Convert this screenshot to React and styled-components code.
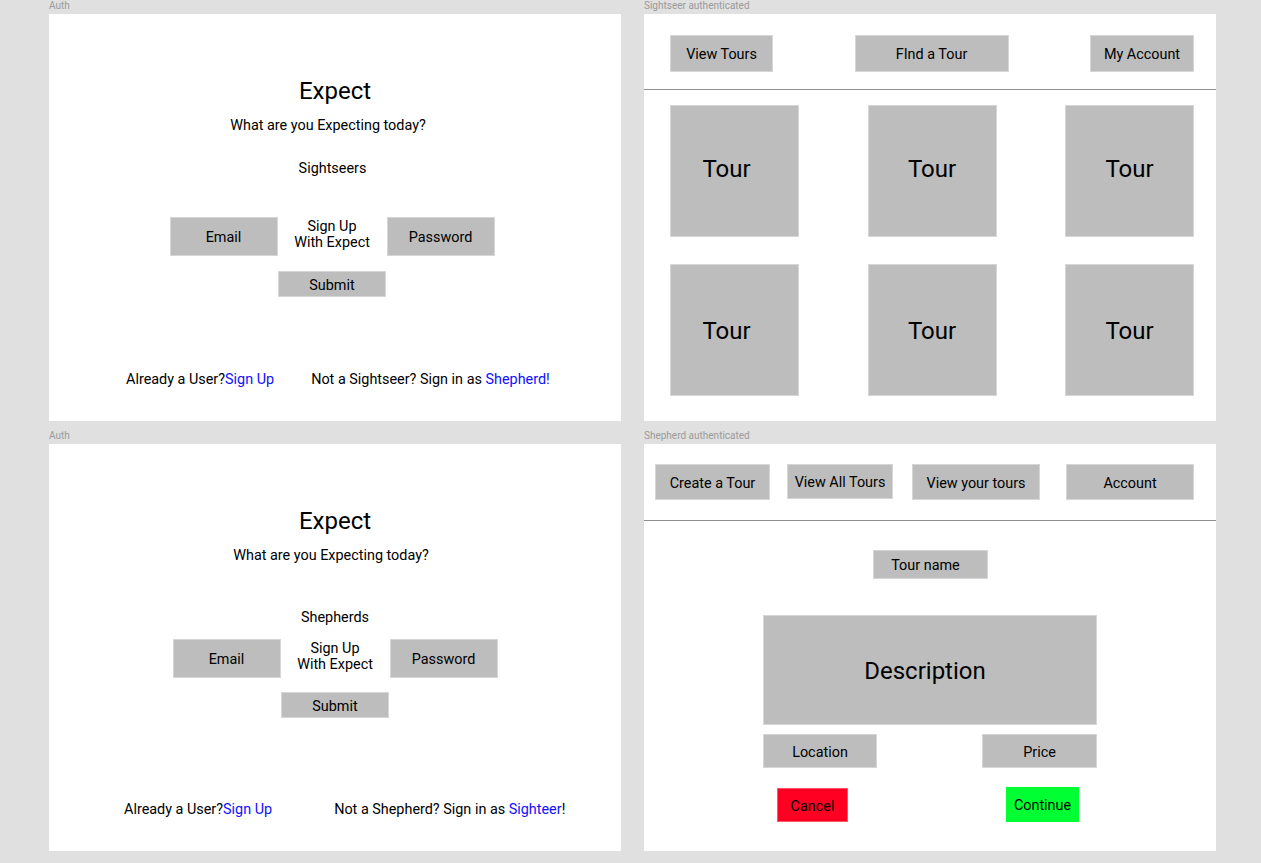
import React from 'react';
import styled, { createGlobalStyle } from 'styled-components';

const GlobalStyle = createGlobalStyle`
    html, body {
        margin:0;
        padding:0;
        background:#e0e0e0;
    }
    body {
        font-family: Roboto, "Liberation Sans", Arial, sans-serif;
        color:#000;
    }
`;

const Canvas = styled.div`
    display:grid;
    grid-template-columns:572px 572px;
    align-content:start;
    column-gap:23px;
    row-gap:9px;
    padding-left:49px;
    width:1261px;
    min-height:863px;
    box-sizing:border-box;
`;

const FrameWrap = styled.div`
    display:flex;
    flex-direction:column;
`;

const FrameLabel = styled.div`
    height:14px;
    line-height:12px;
    font-size:10px;
    color:#9a9a9a;
    white-space:nowrap;
`;

const Frame = styled.div`
    width:572px;
    height:407px;
    background:#fff;
    box-sizing:border-box;
    display:flex;
    flex-direction:column;
`;

/* ---------- auth ---------- */

const AuthBody = styled.div`
    display:flex;
    flex-direction:column;
    align-items:center;
    height:100%;
    padding-top:63px;
    padding-bottom:33px;
    box-sizing:border-box;
`;

const Title = styled.h1`
    margin:0;
    font-size:24px;
    line-height:28px;
    font-weight:400;
`;

const Text = styled.div`
    font-size:14.4px;
    line-height:16px;
    margin-top:${p => p.$mt || 0}px;
    margin-left:${p => p.$shift || 0}px;
    text-align:center;
    white-space:nowrap;
`;

const Box = styled.div`
    width:${p => p.$w}px;
    height:${p => p.$h}px;
    margin-left:${p => p.$ml || 0}px;
    margin-top:${p => p.$mt || 0}px;
    background:${p => p.$bg || '#bdbdbd'};
    border:1px solid ${p => p.$border || '#d6d6d6'};
    box-sizing:border-box;
    display:flex;
    align-items:center;
    justify-content:center;
    font-size:${p => p.$fs || 14.4}px;
    padding-top:${p => p.$pt ?? 2}px;
    padding-right:${p => p.$pr || 0}px;
    padding-bottom:${p => p.$pb || 0}px;
    flex-shrink:0;
    white-space:nowrap;
`;

const FormRow = styled.div`
    display:flex;
    align-items:center;
    margin-top:${p => p.$mt}px;
    margin-left:${p => p.$shift || 0}px;
`;

const Middle = styled.div`
    width:109px;
    text-align:center;
    font-size:14.4px;
    line-height:16px;
    padding-bottom:3px;
`;

const Footer = styled.div`
    margin-top:auto;
    align-self:stretch;
    display:flex;
    gap:${p => p.$gap}px;
    padding-left:${p => p.$pl}px;
    font-size:14.4px;
    line-height:16px;
    white-space:nowrap;
`;

const Link = styled.span`
    color:#1010ff;
`;

function AuthFrame({ role, subShift, roleShift, roleGap, rowGap, submitGap, shift, footGap, footLeft, other, otherLink, tail }) {
    return (
        <Frame>
            <AuthBody>
                <Title>Expect</Title>
                <Text $mt={13} $shift={subShift}>What are you Expecting today?</Text>
                <Text $mt={roleGap} $shift={roleShift}>{role}</Text>
                <FormRow $mt={rowGap} $shift={shift}>
                    <Box $w={108} $h={39}>Email</Box>
                    <Middle>Sign Up<br />With Expect</Middle>
                    <Box $w={108} $h={39}>Password</Box>
                </FormRow>
                <FormRow $mt={submitGap} $shift={shift}>
                    <Box $w={108} $h={26}>Submit</Box>
                </FormRow>
                <Footer $gap={footGap} $pl={footLeft}>
                    <span>Already a User?<Link>Sign Up</Link></span>
                    <span>{other}<Link>{otherLink}</Link>{tail}</span>
                </Footer>
            </AuthBody>
        </Frame>
    );
}

/* ---------- authenticated ---------- */

const NavRow = styled.div`
    height:${p => p.$h}px;
    display:flex;
    align-items:flex-start;
    justify-content:${p => p.$justify || 'flex-start'};
    gap:${p => p.$gap || 0}px;
    padding:${p => p.$top}px 22px 0 ${p => p.$left}px;
    box-sizing:border-box;
    border-bottom:1px solid #8e8e8e;
`;

const TourGrid = styled.div`
    display:grid;
    grid-template-columns:129px 129px 129px;
    justify-content:space-between;
    row-gap:27px;
    padding:15px 22px 0 26px;
`;

const CreateBody = styled.div`
    display:flex;
    flex-direction:column;
    align-items:center;
    padding-top:29px;
`;

const Pair = styled.div`
    width:334px;
    display:flex;
    justify-content:space-between;
    align-items:flex-start;
    margin-top:${p => p.$mt}px;
    padding:0 ${p => p.$pr || 0}px 0 ${p => p.$pl || 0}px;
    box-sizing:border-box;
`;

const tourRows = [0, 1];
const tourCols = [16, 0, 0];

export default function App() {
    return (
        <>
            <GlobalStyle />
            <Canvas>
                <FrameWrap>
                    <FrameLabel>Auth</FrameLabel>
                    <AuthFrame
                        role="Sightseers"
                        subShift={-14}
                        roleShift={-5}
                        roleGap={27}
                        rowGap={40}
                        submitGap={15}
                        shift={-6}
                        footGap={37}
                        footLeft={77}
                        other="Not a Sightseer? Sign in as "
                        otherLink="Shepherd!"
                        tail=""
                    />
                </FrameWrap>

                <FrameWrap>
                    <FrameLabel>Sightseer authenticated</FrameLabel>
                    <Frame>
                        <NavRow $h={76} $top={21} $left={26} $justify="space-between">
                            <Box $w={103} $h={37}>View Tours</Box>
                            <Box $w={154} $h={37}>FInd a Tour</Box>
                            <Box $w={104} $h={37}>My Account</Box>
                        </NavRow>
                        <TourGrid>
                            {tourRows.map(r =>
                                tourCols.map((pr, c) => (
                                    <Box
                                        key={r + '-' + c}
                                        $w={129}
                                        $h={132}
                                        $fs={24}
                                        $pr={pr}
                                        $pt={r === 0 ? 0 : 2}
                                        $pb={r === 0 ? 4 : 0}
                                    >
                                        Tour
                                    </Box>
                                ))
                            )}
                        </TourGrid>
                    </Frame>
                </FrameWrap>

                <FrameWrap>
                    <FrameLabel>Auth</FrameLabel>
                    <AuthFrame
                        role="Shepherds"
                        subShift={-8}
                        roleShift={0}
                        roleGap={46}
                        rowGap={13}
                        submitGap={14}
                        shift={0}
                        footGap={62}
                        footLeft={75}
                        other="Not a Shepherd? Sign in as "
                        otherLink="Sighteer"
                        tail="!"
                    />
                </FrameWrap>

                <FrameWrap>
                    <FrameLabel>Shepherd authenticated</FrameLabel>
                    <Frame>
                        <NavRow $h={77} $top={20} $left={11} $gap={17}>
                            <Box $w={115} $h={36}>Create a Tour</Box>
                            <Box $w={106} $h={35}>View All Tours</Box>
                            <Box $w={128} $h={36} $ml={2}>View your tours</Box>
                            <Box $w={128} $h={36} $ml={9}>Account</Box>
                        </NavRow>
                        <CreateBody>
                            <Box $w={115} $h={29} $pr={9}>Tour name</Box>
                            <Box $w={334} $h={110} $fs={24} $pr={10} $mt={36}>Description</Box>
                            <Pair $mt={9}>
                                <Box $w={114} $h={34}>Location</Box>
                                <Box $w={115} $h={34}>Price</Box>
                            </Pair>
                            <Pair $mt={19} $pl={14} $pr={18}>
                                <Box $w={71} $h={34} $mt={1} $bg="#ff0022" $border="#ff5566">Cancel</Box>
                                <Box $w={73} $h={35} $bg="#00ff33" $border="#00ff33">Continue</Box>
                            </Pair>
                        </CreateBody>
                    </Frame>
                </FrameWrap>
            </Canvas>
        </>
    );
}
